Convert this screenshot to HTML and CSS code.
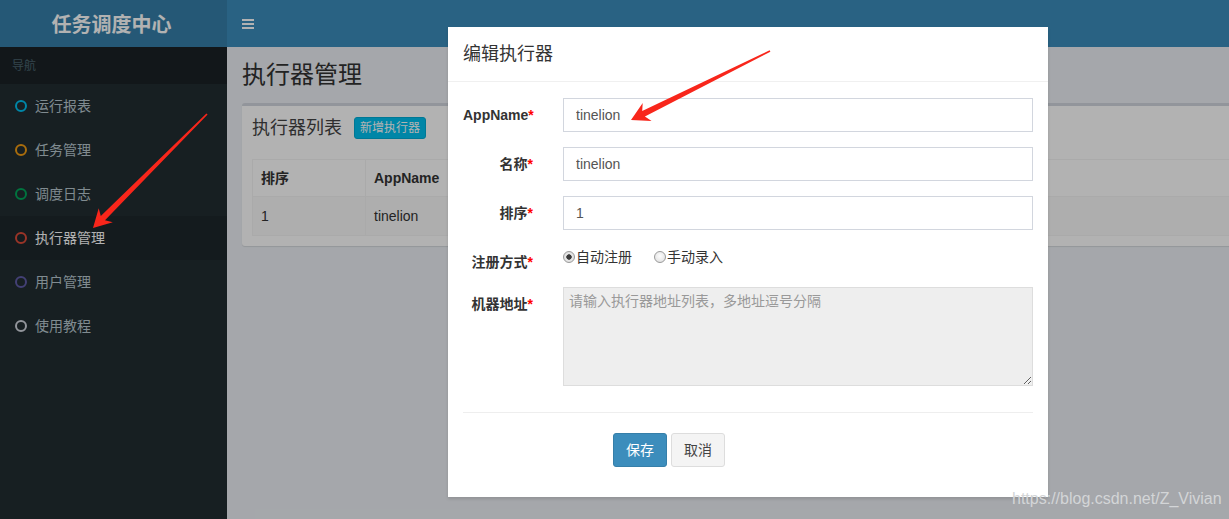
FILE: index.html
```html
<!DOCTYPE html>
<html lang="zh-CN">
<head>
<meta charset="utf-8">
<title>任务调度中心</title>
<link rel="stylesheet" href="styles.css">
</head>
<body>
<div class="wrapper">
  <header class="main-header">
    <div class="logo">任务调度中心</div>
    <nav class="navbar">
      <span class="toggle"><i></i><i></i><i></i></span>
    </nav>
  </header>
  <div class="layout">
    <aside class="sidebar">
      <div class="nav-header">导航</div>
      <ul class="menu">
        <li><span class="dot aqua"></span>运行报表</li>
        <li><span class="dot yellow"></span>任务管理</li>
        <li><span class="dot green"></span>调度日志</li>
        <li class="active"><span class="dot red"></span>执行器管理</li>
        <li><span class="dot purple"></span>用户管理</li>
        <li><span class="dot gray"></span>使用教程</li>
      </ul>
    </aside>
    <main class="content-wrapper">
      <section class="content-header">
        <h1>执行器管理</h1>
      </section>
      <section class="content">
        <div class="box">
          <div class="box-header">
            <h3>执行器列表</h3>
            <button class="btn-xs">新增执行器</button>
          </div>
          <div class="box-body">
            <table class="table">
              <colgroup><col class="c1"><col class="c2"><col></colgroup>
              <thead>
                <tr><th>排序</th><th>AppName</th><th>名称</th></tr>
              </thead>
              <tbody>
                <tr><td>1</td><td>tinelion</td><td>tinelion</td></tr>
              </tbody>
            </table>
          </div>
        </div>
      </section>
    </main>
  </div>
</div>

<div class="backdrop"></div>

<div class="modal">
  <div class="modal-header"><h4>编辑执行器</h4></div>
  <div class="modal-body">
    <form class="form">
      <div class="form-group">
        <label class="control-label">AppName<span class="req">*</span></label>
        <div class="control"><input class="form-control" type="text" value="tinelion"></div>
      </div>
      <div class="form-group">
        <label class="control-label">名称<span class="req">*</span></label>
        <div class="control"><input class="form-control" type="text" value="tinelion"></div>
      </div>
      <div class="form-group">
        <label class="control-label">排序<span class="req">*</span></label>
        <div class="control"><input class="form-control" type="text" value="1"></div>
      </div>
      <div class="form-group">
        <label class="control-label">注册方式<span class="req">*</span></label>
        <div class="control radios">
          <label class="radio-inline"><input type="radio" name="t" checked>自动注册</label>
          <label class="radio-inline"><input type="radio" name="t">手动录入</label>
        </div>
      </div>
      <div class="form-group">
        <label class="control-label">机器地址<span class="req">*</span></label>
        <div class="control"><textarea class="form-control area" placeholder="请输入执行器地址列表，多地址逗号分隔"></textarea></div>
      </div>
      <hr class="sep">
      <div class="actions">
        <button type="button" class="btn btn-primary">保存</button>
        <button type="button" class="btn btn-default">取消</button>
      </div>
    </form>
  </div>
</div>

<svg class="arrows" viewBox="0 0 1229 519" width="1229" height="519">
  <polygon fill="#f8261b" points="93,228 112.8,222.3 105,220.2 207.6,114.6 206.4,113.4 100.8,216 98.7,208.2"/>
  <polygon fill="#f8261b" points="631,120 651.6,121 644.9,116.5 770.4,51.7 769.6,50.3 642.2,111.1 642.7,103"/>
</svg>

<div class="watermark">https://blog.csdn.net/Z_Vivian</div>
</body>
</html>
```

FILE: styles.css
```css
* {
  box-sizing: border-box;
  margin: 0;
  padding: 0;
}

html, body {
  width: 1229px;
  height: 519px;
  overflow: hidden;
}

body {
  position: relative;
  font-family: "Liberation Sans", "Noto Sans CJK SC", sans-serif;
  font-size: 14px;
  line-height: 20px;
  color: #333;
  background: #ecf0f5;
}

/* header */
.main-header {
  display: flex;
  height: 47px;
}

.logo {
  width: 227px;
  background: #367fa9;
  color: #fff;
  font-family: "Noto Sans CJK SC", sans-serif;
  font-size: 20px;
  font-weight: bold;
  display: flex;
  align-items: center;
  justify-content: center;
  padding-right: 4px;
}

.navbar {
  flex: 1;
  background: #3c8dbc;
  display: flex;
  align-items: center;
  padding-left: 15px;
}

.toggle {
  display: flex;
  flex-direction: column;
  gap: 2px;
  width: 12px;
}

.toggle i {
  display: block;
  height: 2px;
  background: #fff;
}

/* layout */
.layout {
  display: flex;
  height: 472px;
}

.sidebar {
  width: 227px;
  flex: none;
  background: #222d32;
}

.nav-header {
  height: 37px;
  background: #1a2226;
  color: #4b646f;
  font-size: 12px;
  padding-left: 12px;
  display: flex;
  align-items: center;
}

.menu {
  list-style: none;
}

.menu li {
  height: 44px;
  display: flex;
  align-items: center;
  padding-left: 15px;
  color: #b8c7ce;
  font-size: 14px;
}

.menu li.active {
  background: #1e282c;
  color: #fff;
}

.dot {
  width: 12px;
  height: 12px;
  border: 2.5px solid;
  border-radius: 50%;
  margin-right: 8px;
}

.aqua { border-color: #00c0ef; }
.yellow { border-color: #f39c12; }
.green { border-color: #00a65a; }
.red { border-color: #dd4b39; }
.purple { border-color: #605ca8; }
.gray { border-color: #d2d6de; }

/* content */
.content-wrapper {
  flex: 1;
  min-width: 0;
}

.content-header {
  padding: 15px 15px 0 15px;
}

.content-header h1 {
  font-size: 24px;
  font-weight: normal;
  line-height: 26px;
  color: #333;
}

.content {
  padding: 15px 0 0 15px;
}

.box {
  background: #fff;
  border-top: 3px solid #d2d6de;
  border-radius: 3px;
  box-shadow: 0 1px 1px rgba(0, 0, 0, .1);
  margin-right: -40px;
}

.box-header {
  display: flex;
  align-items: center;
  gap: 12px;
  padding: 11px 10px 10px 10px;
}

.box-header h3 {
  font-size: 18px;
  font-weight: normal;
  line-height: 22px;
  color: #444;
}

.btn-xs {
  font-family: inherit;
  background: #00c0ef;
  border: 1px solid #00acd6;
  color: #fff;
  font-size: 12px;
  line-height: 18px;
  padding: 1px 5px;
  border-radius: 3px;
}

.box-body {
  padding: 10px;
}

.table {
  width: 100%;
  border-collapse: collapse;
  table-layout: fixed;
  border: 1px solid #f4f4f4;
}

.table col.c1 { width: 113px; }
.table col.c2 { width: 200px; }

.table th,
.table td {
  text-align: left;
  border: 1px solid #f4f4f4;
  padding: 8px;
  line-height: 20px;
  color: #333;
}

.table td {
  padding: 9px 8px;
}

.table tbody tr:nth-of-type(odd) {
  background: #f9f9f9;
}

/* overlay */
.backdrop {
  position: absolute;
  inset: 0;
  background: rgba(0, 0, 0, .3);
}

.modal {
  position: absolute;
  left: 448px;
  top: 27px;
  width: 600px;
  background: #fff;
  box-shadow: 0 2px 3px rgba(0, 0, 0, .125);
}

.modal-header {
  padding: 15px;
  border-bottom: 1px solid #f0f0f0;
}

.modal-header h4 {
  font-size: 18px;
  font-weight: normal;
  line-height: 24px;
  color: #333;
}

.modal-body {
  padding: 16px 15px 15px 15px;
}

.form-group {
  display: flex;
  margin: 0 -15px 15px -15px;
}

.control-label {
  width: 100px;
  flex: none;
  padding: 7px 15px 0 15px;
  text-align: right;
  font-weight: bold;
  color: #333;
  line-height: 20px;
}

.req {
  color: #f00;
  font-weight: bold;
}

.control {
  width: 500px;
  padding: 0 15px;
}

.form-control {
  display: block;
  width: 100%;
  height: 34px;
  padding: 6px 12px;
  font-family: inherit;
  font-size: 14px;
  line-height: 20px;
  color: #555;
  border: 1px solid #d2d6de;
  background: #fff;
  border-radius: 0;
  outline: none;
}

.area {
  height: 99px;
  padding: 3px 5px;
  background: #eee;
  resize: vertical;
  border-color: #ddd;
}

.area::placeholder {
  color: #999;
}

.radios {
  display: flex;
  height: 25px;
  padding-top: 2px;
  gap: 22px;
}

.radio-inline {
  display: flex;
  align-items: center;
  height: 20px;
  color: #333;
}

.radio-inline input {
  appearance: none;
  -webkit-appearance: none;
  width: 12px;
  height: 12px;
  margin: 0 1px 0 0;
  border: 1px solid #9a9a9a;
  border-radius: 50%;
  background: radial-gradient(circle at 50% 40%, #fdfdfd 0, #dcdcdc 100%);
}

.radio-inline input:checked {
  background: radial-gradient(circle, #3a3a3a 0 2.4px, #e8e8e8 3px, #d6d6d6 100%);
}

.sep {
  border: 0;
  border-top: 1px solid #eee;
  margin: 26px 0 20px 0;
}

.actions {
  display: flex;
  gap: 4px;
  padding-left: 150px;
  margin-bottom: 15px;
}

.btn {
  font-family: inherit;
  font-size: 14px;
  line-height: 20px;
  padding: 6px 12px;
  border-radius: 3px;
  border: 1px solid transparent;
  height: 34px;
}

.btn-primary {
  background: #3c8dbc;
  border-color: #367fa9;
  color: #fff;
}

.btn-default {
  background: #f4f4f4;
  border-color: #ddd;
  color: #444;
}

.arrows {
  position: absolute;
  left: 0;
  top: 0;
  pointer-events: none;
}

.watermark {
  position: absolute;
  left: 1012px;
  top: 489px;
  font-size: 16px;
  line-height: 20px;
  color: #d3d5d7;
  white-space: nowrap;
}
```
